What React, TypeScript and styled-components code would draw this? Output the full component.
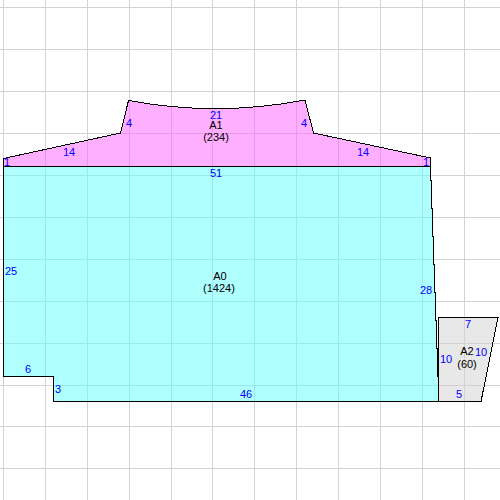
import React from 'react';
import styled, { createGlobalStyle } from 'styled-components';

const GlobalStyle = createGlobalStyle`
  html, body {
    margin: 0;
    padding: 0;
    background: #fff;
  }
`;

const Canvas = styled.div`
  width: 500px;
  height: 500px;
  overflow: hidden;
  background: #fff;
`;

const Drawing = styled.svg`
  display: block;
  width: 500px;
  height: 500px;
  font-family: "Liberation Sans", Arial, sans-serif;
  font-size: 11px;
`;

const GridLine = styled.line`
  stroke: #d3d3d3;
  stroke-width: 1;
  shape-rendering: crispEdges;
`;

const Fill = styled.path<{ $color: string }>`
  fill: ${p => p.$color};
  stroke: none;
`;

const Outline = styled.path`
  fill: none;
  stroke: #000;
  stroke-width: 1;
  shape-rendering: crispEdges;
`;

const Caption = styled.text`
  fill: #000;
  text-anchor: middle;
`;

const Measure = styled.text`
  fill: #0000ff;
  text-anchor: middle;
`;

const gridX = [3.5, 45.5, 87.5, 129.5, 171.5, 212.5, 254.5, 296.5, 338.5, 380.5, 422.5, 464.5];
const gridY = [7.5, 49.5, 91.5, 133.5, 175.5, 217.5, 259.5, 301.5, 343.5, 385.5, 426.5, 468.5];

// fills are half transparent so the grid shows through them
const pieces = [
  {
    color: 'rgba(95, 255, 255, 0.5)',
    d: 'M3.5 166.5 H430.5 V180 H431.5 V208 H432.5 V236 H433.5 V264 H434.5 V292 H435.5 V320 H436.5 V348 H437.5 V376 H438.5 V401.5 H53.5 V376.5 H3.5 Z',
  },
  {
    color: 'rgba(255, 95, 255, 0.5)',
    d: 'M3.5 166.5 V158.5 L120.5 133 L128.5 100.5 Q217 117 305 100 L313.5 133 L430.5 158 V166.5 Z',
  },
  {
    color: 'rgba(209, 209, 209, 0.5)',
    d: 'M438.5 317.5 H498 L481 401.5 H438.5 Z',
  },
];

const captions = [
  { x: 216, y: 129, text: 'A1' },
  { x: 216, y: 141, text: '(234)' },
  { x: 220, y: 280, text: 'A0' },
  { x: 219, y: 292, text: '(1424)' },
  { x: 467, y: 355, text: 'A2' },
  { x: 467, y: 368, text: '(60)' },
];

const measures = [
  { x: 216, y: 119, text: '21' },
  { x: 216, y: 177, text: '51' },
  { x: 69, y: 156, text: '14' },
  { x: 363, y: 156, text: '14' },
  { x: 129, y: 127, text: '4' },
  { x: 304, y: 127, text: '4' },
  { x: 7, y: 166, text: '1' },
  { x: 426, y: 166, text: '1' },
  { x: 11, y: 275, text: '25' },
  { x: 426, y: 294, text: '28' },
  { x: 246, y: 398, text: '46' },
  { x: 28, y: 373, text: '6' },
  { x: 58, y: 393, text: '3' },
  { x: 446, y: 363, text: '10' },
  { x: 481, y: 356, text: '10' },
  { x: 468, y: 328, text: '7' },
  { x: 459, y: 398, text: '5' },
];

const App: React.FC = () => {
  return (
    <Canvas>
      <GlobalStyle />
      <Drawing viewBox="0 0 500 500">
        {gridX.map(x => (
          <GridLine key={x} x1={x} x2={x} y1={0} y2={500} />
        ))}
        {gridY.map(y => (
          <GridLine key={y} x1={0} x2={500} y1={y} y2={y} />
        ))}
        {pieces.map(p => (
          <Fill key={p.color} $color={p.color} d={p.d} />
        ))}
        {pieces.map(p => (
          <Outline key={p.color} d={p.d} />
        ))}
        {captions.map(c => (
          <Caption key={c.text} x={c.x} y={c.y}>
            {c.text}
          </Caption>
        ))}
        {measures.map(m => (
          <Measure key={`${m.x}-${m.y}`} x={m.x} y={m.y}>
            {m.text}
          </Measure>
        ))}
      </Drawing>
    </Canvas>
  );
};

export default App;
